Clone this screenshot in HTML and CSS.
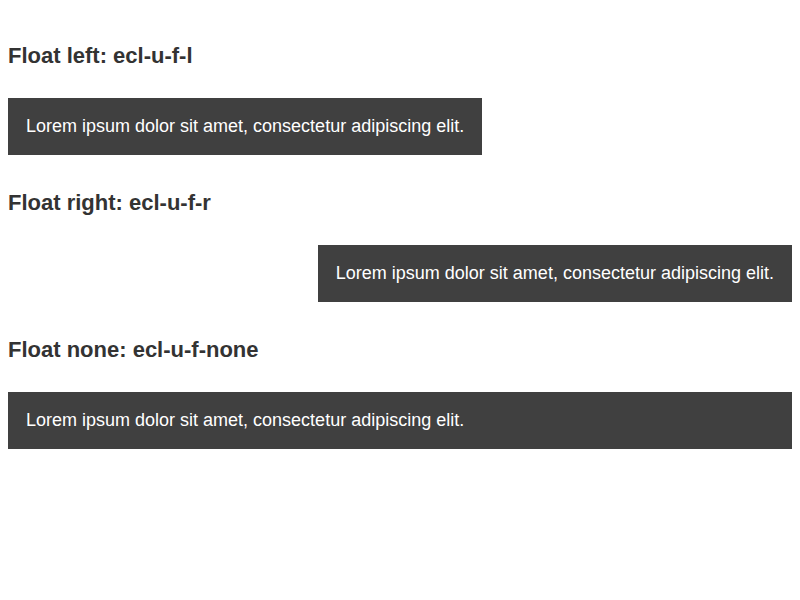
FILE: index.html
```html
<!DOCTYPE html>
<html>
<head>
<meta charset="utf-8">
<link rel="stylesheet" href="styles.css">
</head>
<body>
<main class="page">
  <h2 class="title">Float left: ecl-u-f-l</h2>
  <div class="box box--left">Lorem ipsum dolor sit amet, consectetur adipiscing elit.</div>
  <h2 class="title">Float right: ecl-u-f-r</h2>
  <div class="box box--right">Lorem ipsum dolor sit amet, consectetur adipiscing elit.</div>
  <h2 class="title">Float none: ecl-u-f-none</h2>
  <div class="box">Lorem ipsum dolor sit amet, consectetur adipiscing elit.</div>
</main>
</body>
</html>
```
FILE: styles.css
```css
html, body {
  margin: 0;
  padding: 0;
  background: #fff;
}
.page {
  padding: 8px;
  display: flex;
  flex-direction: column;
  font-family: "Liberation Sans", Arial, sans-serif;
}
.title {
  margin: 35px 0 29px;
  font-size: 22px;
  line-height: 26px;
  font-weight: 700;
  color: #333;
}
.box {
  background: #404040;
  color: #fff;
  font-size: 18px;
  line-height: 21px;
  padding: 18px;
}
.box--left {
  align-self: flex-start;
}
.box--right {
  align-self: flex-end;
}
```
